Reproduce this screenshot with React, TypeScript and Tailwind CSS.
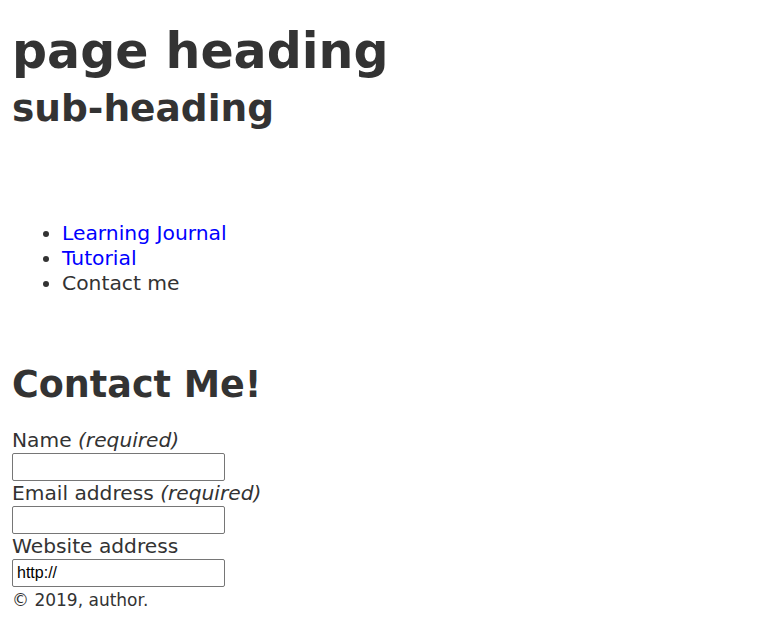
import React from 'react';

const font = { fontFamily: '"DejaVu Sans", Verdana, sans-serif' };
const inputFont = { fontFamily: '"Liberation Sans", Arial, sans-serif' };

export default function App() {
  return (
    <div className="min-h-[625px] bg-white px-3 text-[#333333]" style={font}>
      <header>
        <h1 className="pt-[23px] text-[49px] font-bold leading-[58px]">page heading</h1>
        <h2 className="mt-[7px] text-[37.5px] font-bold leading-[40px]">sub-heading</h2>
      </header>
      <nav className="mt-[93px]">
        <ul className="list-disc pl-[50px] text-[20.3px] leading-[25px]">
          <li><a href="#" className="text-[#0000ff]">Learning Journal</a></li>
          <li><a href="#" className="text-[#0000ff]">Tutorial</a></li>
          <li>Contact me</li>
        </ul>
      </nav>
      <main className="mt-[68px]">
        <h2 className="text-[36.5px] font-bold leading-[42px]">Contact Me!</h2>
        <form className="mt-[22px] text-[20.2px] leading-[25px]">
          <label className="block">Name <em>(required)</em></label>
          <input className="block h-[28px] w-[213px] rounded-[2px] border border-[#767676] px-1 text-[16px]" style={inputFont} />
          <label className="block">Email address <em>(required)</em></label>
          <input className="block h-[28px] w-[213px] rounded-[2px] border border-[#767676] px-1 text-[16px]" style={inputFont} />
          <label className="block">Website address</label>
          <input defaultValue="http://" className="block h-[28px] w-[213px] rounded-[2px] border border-[#767676] px-1 text-[16px] text-black" style={inputFont} />
        </form>
      </main>
      <footer className="mt-[1px] text-[17px] leading-[24px]">© 2019, author.</footer>
    </div>
  );
}
